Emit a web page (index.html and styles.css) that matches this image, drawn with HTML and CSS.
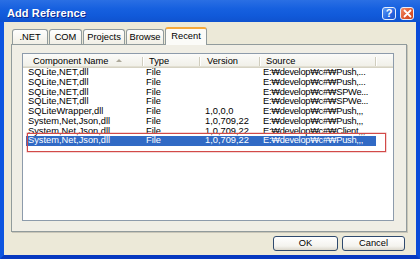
FILE: index.html
```html
<!DOCTYPE html>
<html lang="en">
<head>
    <meta charset="UTF-8">
    <title>Add Reference</title>
    <link rel="stylesheet" href="styles.css">
</head>
<body>
    <div class="window">
        <div class="titlebar">
            <span class="title">Add Reference</span>
            <div class="caption-btns">
                <span class="cbtn help">?</span>
                <span class="cbtn close">
                    <svg width="9" height="9" viewBox="0 0 9 9"><path d="M1.5 1.5 L7.5 7.5 M7.5 1.5 L1.5 7.5" stroke="#fff" stroke-width="1.8" stroke-linecap="round"/></svg>
                </span>
            </div>
        </div>
        <div class="frame">
            <div class="tabs">
                <div class="tab w-net">.NET</div>
                <div class="tab w-com">COM</div>
                <div class="tab w-proj">Projects</div>
                <div class="tab w-browse">Browse</div>
                <div class="tab active w-recent">Recent</div>
            </div>
            <div class="panel">
                <div class="list">
                    <div class="list-head">
                        <div class="hcell h-name">Component Name <span class="sort"></span></div>
                        <div class="hcell h-type">Type</div>
                        <div class="hcell h-ver">Version</div>
                        <div class="hcell h-src">Source</div>
                        <div class="hcell h-fill"></div>
                    </div>
                    <div class="row"><span class="c-name">SQLite,NET,dll</span><span class="c-type">File</span><span class="c-ver"></span><span class="c-src">E:₩develop₩c#₩Push,...</span></div>
                    <div class="row"><span class="c-name">SQLite,NET,dll</span><span class="c-type">File</span><span class="c-ver"></span><span class="c-src">E:₩develop₩c#₩Push,...</span></div>
                    <div class="row"><span class="c-name">SQLite,NET,dll</span><span class="c-type">File</span><span class="c-ver"></span><span class="c-src">E:₩develop₩c#₩SPWe...</span></div>
                    <div class="row"><span class="c-name">SQLite,NET,dll</span><span class="c-type">File</span><span class="c-ver"></span><span class="c-src">E:₩develop₩c#₩SPWe...</span></div>
                    <div class="row"><span class="c-name">SQLiteWrapper,dll</span><span class="c-type">File</span><span class="c-ver">1,0,0,0</span><span class="c-src">E:₩develop₩c#₩Push,,,</span></div>
                    <div class="row"><span class="c-name">System,Net,Json,dll</span><span class="c-type">File</span><span class="c-ver">1,0,709,22</span><span class="c-src">E:₩develop₩c#₩Push,,,</span></div>
                    <div class="row"><span class="c-name">System,Net,Json,dll</span><span class="c-type">File</span><span class="c-ver">1,0,709,22</span><span class="c-src">E:₩develop₩c#₩Client,,,</span></div>
                    <div class="row selected"><span class="c-name">System,Net,Json,dll</span><span class="c-type">File</span><span class="c-ver">1,0,709,22</span><span class="c-src">E:₩develop₩c#₩Push,,,</span></div>
                    <div class="mark"></div>
                </div>
            </div>
            <div class="buttons">
                <button class="btn btn-ok">OK</button>
                <button class="btn btn-cancel">Cancel</button>
            </div>
        </div>
    </div>
</body>
</html>
```

FILE: styles.css
```css
body {
    margin: 0;
    padding: 0;
    font-family: "Liberation Sans", "DejaVu Sans", Arial, sans-serif;
    font-size: 9.3px;
    color: #000;
    background: #0a4bd8;
}
.window {
    width: 420px;
    height: 259px;
    display: flex;
    flex-direction: column;
}
.titlebar {
    height: 22px;
    display: flex;
    align-items: center;
    justify-content: space-between;
    padding: 0 6px 0 7px;
    background: linear-gradient(#2a6fe4, #1660df 40%, #115ada 70%, #0f52cf);
}
.title {
    color: #fff;
    font-weight: bold;
    font-size: 11px;
    letter-spacing: 0.1px;
    text-shadow: 1px 1px 0 #0c2a93;
    margin-top: 3px;
}
.caption-btns {
    display: flex;
    gap: 4px;
    margin-top: 4px;
}
.cbtn {
    box-sizing: border-box;
    width: 14px;
    height: 13px;
    border: 1px solid #e6eefc;
    border-radius: 3px;
    display: flex;
    align-items: center;
    justify-content: center;
    color: #fff;
    font-weight: bold;
    font-size: 11px;
}
.help {
    background: linear-gradient(135deg, #5d9bf6, #2766e0 60%, #1b54cd);
}
.close {
    background: linear-gradient(135deg, #f08d6a, #e05a30 55%, #c9411d);
}
.frame {
    flex: 1;
    background: #ece9d8;
    border-left: 4px solid #0d55e0;
    border-right: 4px solid #0a4bd8;
    border-bottom: 4px solid #0638c0;
    padding: 7px 9px 0 7px;
    display: flex;
    flex-direction: column;
}
.tabs {
    height: 15px;
    display: flex;
    align-items: flex-end;
    padding-left: 1px;
}
.tab {
    box-sizing: border-box;
    height: 15px;
    margin-right: 1px;
    border: 1px solid #919b9c;
    border-bottom: none;
    border-radius: 3px 3px 0 0;
    background: linear-gradient(#fefefd, #f1efe6);
    text-align: center;
    line-height: 14px;
}
.tab.active {
    height: 18px;
    margin-bottom: -1px;
    position: relative;
    z-index: 1;
    border-top: 2px solid #f5a83a;
    background: #fbfbf8;
    line-height: 15px;
}
.w-net { width: 36px; }
.w-com { width: 33px; }
.w-proj { width: 42px; }
.w-browse { width: 38px; }
.w-recent { width: 42px; }
.panel {
    box-sizing: border-box;
    height: 188px;
    border: 1px solid #919b9c;
    box-shadow: 1px 1px 0 #c9c6b8;
    background: #f0eee5;
    padding: 8px 12px 10px 10px;
}
.list {
    box-sizing: border-box;
    height: 168px;
    border: 1px solid #8d9bab;
    background: #fff;
    position: relative;
    overflow: hidden;
}
.list-head {
    display: grid;
    grid-template-columns: 120px 57px 60px 116px 1fr;
    height: 14px;
    background: linear-gradient(#fbfbf9, #efeee6);
    box-shadow: inset 0 -1px #d6d3c4, inset 0 -2px #e2dfd2;
}
.hcell {
    position: relative;
    line-height: 15px;
    white-space: nowrap;
}
.hcell::after {
    content: "";
    position: absolute;
    right: 0;
    top: 3px;
    bottom: 3px;
    width: 1px;
    background: #d0cdbe;
    box-shadow: 1px 0 #fff;
}
.h-fill::after { display: none; }
.h-name { padding-left: 10px; }
.h-type { padding-left: 6px; }
.h-ver { padding-left: 7px; }
.h-src { padding-left: 6px; }
.sort {
    display: inline-block;
    width: 0;
    height: 0;
    margin-left: 5px;
    vertical-align: 2px;
    border-left: 3px solid transparent;
    border-right: 3px solid transparent;
    border-bottom: 3px solid #aca899;
}
.row {
    display: grid;
    grid-template-columns: 117px 57px 60px 116px;
    width: 350px;
    margin-left: 3px;
    height: 9.75px;
    line-height: 9.75px;
    white-space: nowrap;
}
.row span {
    overflow: hidden;
}
.row .c-src {
    overflow: visible;
    letter-spacing: -0.3px;
}
.c-name { padding-left: 2px; }
.c-type { padding-left: 3px; }
.c-ver { padding-left: 5px; }
.c-src { padding-left: 3px; }
.row.selected {
    background: #316ac5;
    color: #fff;
}
.mark {
    position: absolute;
    left: 4px;
    top: 79px;
    width: 359px;
    height: 19px;
    box-sizing: border-box;
    border: 1px solid #d24a48;
    box-shadow: 0 0 0 0.5px rgba(210, 74, 72, 0.45);
}
.buttons {
    display: flex;
    justify-content: flex-end;
    gap: 4px;
    margin-top: 4px;
    margin-right: 2px;
}
.btn {
    box-sizing: border-box;
    height: 15px;
    padding: 0;
    border: 1px solid #2f4a6e;
    border-radius: 3px;
    background: linear-gradient(#ffffff, #f4f3ee 70%, #dcd8cc);
    font-family: inherit;
    font-size: 9.3px;
    color: #000;
    line-height: 13px;
}
.btn-ok { width: 65px; }
.btn-cancel { width: 63px; }
```
